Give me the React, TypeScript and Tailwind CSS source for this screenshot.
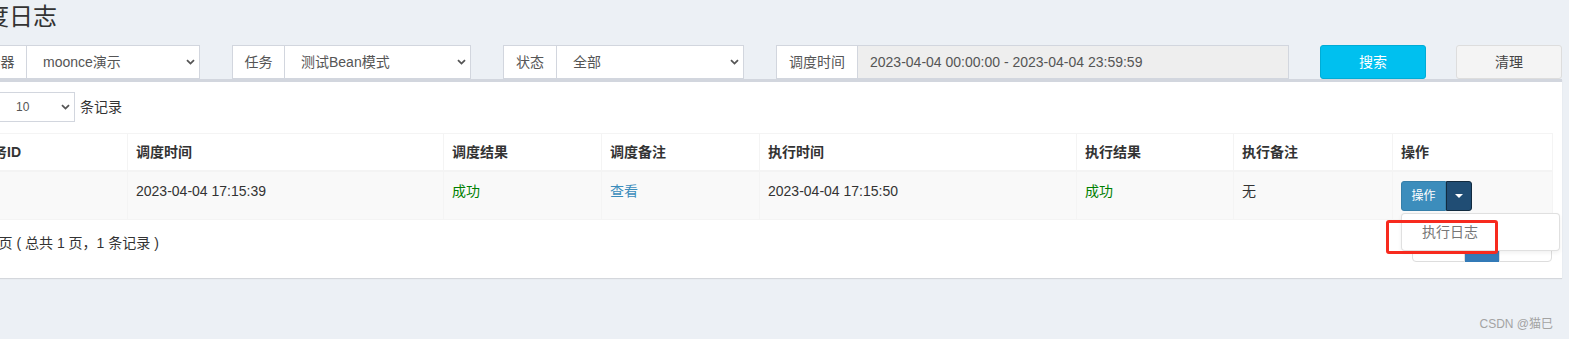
import React from "react";

function Chevron({ className = "" }: { className?: string }) {
  return (
    <svg width="9" height="6" viewBox="0 0 9 6" className={className}>
      <path d="M1 1.2 L4.5 4.6 L8 1.2" fill="none" stroke="#555" strokeWidth="1.8" />
    </svg>
  );
}

function Group({
  label,
  labelW,
  value,
  selW,
  mr,
}: {
  label: string;
  labelW: string;
  value: string;
  selW: string;
  mr: string;
}) {
  return (
    <div className={`flex h-[34px] ${mr}`}>
      <div
        className={`${labelW} flex items-center justify-center border border-r-0 border-[#d2d6de] bg-white text-[14px] text-[#555]`}
      >
        {label}
      </div>
      <div
        className={`${selW} flex items-center justify-between border border-[#d2d6de] bg-white pl-[16px] pr-[4px] text-[14px] text-[#555]`}
      >
        <span>{value}</span>
        <Chevron />
      </div>
    </div>
  );
}

export default function App() {
  const cols = [157, 316, 158, 158, 317, 157, 159, 160];
  const headers = ["任务ID", "调度时间", "调度结果", "调度备注", "执行时间", "执行结果", "执行备注", "操作"];
  return (
    <div className="relative w-[1569px] h-[339px] overflow-hidden bg-[#ecf0f5] font-['Liberation_Sans','Noto_Sans_CJK_SC',sans-serif] text-[#333]">
      {/* Title */}
      <div className="-ml-[39px] pt-[2px] text-[24px] leading-[30px] text-[#333] whitespace-nowrap">调度日志</div>

      {/* Filters */}
      <div className="flex -ml-[40px] mt-[13px] w-[1700px]">
        <Group label="执行器" labelW="w-[66px]" value="moonce演示" selW="w-[174px]" mr="mr-[32px]" />
        <Group label="任务" labelW="w-[52px]" value="测试Bean模式" selW="w-[187px]" mr="mr-[32px]" />
        <Group label="状态" labelW="w-[53px]" value="全部" selW="w-[188px]" mr="mr-[32px]" />
        <div className="flex h-[34px] mr-[31px]">
          <div className="w-[81px] flex items-center justify-center border border-r-0 border-[#d2d6de] bg-white text-[14px] text-[#555]">
            调度时间
          </div>
          <div className="w-[432px] flex items-center border border-[#d2d6de] bg-[#eee] pl-[12px] text-[14px] text-[#555]">
            2023-04-04 00:00:00 - 2023-04-04 23:59:59
          </div>
        </div>
        <div className="w-[106px] h-[34px] mr-[30px] flex items-center justify-center rounded-[3px] border border-[#00acd6] bg-[#00c0ef] text-[14px] text-white">
          搜索
        </div>
        <div className="w-[106px] h-[34px] flex items-center justify-center rounded-[3px] border border-[#ddd] bg-[#f4f4f4] text-[14px] text-[#444]">
          清理
        </div>
      </div>

      {/* Box */}
      <div className="-ml-[40px] w-[1602px] border-t-[3px] border-[#d2d6de] bg-white shadow-[0_1px_1px_rgba(0,0,0,0.1)] px-[10px] pt-[10px] pb-[16px]">
        {/* length */}
        <div className="flex items-center h-[30px]">
          <div className="ml-[27px] w-[78px] h-[30px] flex items-center justify-between border border-[#d2d6de] bg-white pl-[18px] pr-[4px] text-[12px] text-[#555]">
            <span>10</span>
            <Chevron />
          </div>
          <span className="ml-[5px] text-[14px] text-[#333]">条记录</span>
        </div>

        {/* table */}
        <table className="mt-[11px] w-[1582px] table-fixed border-collapse text-[14px]">
          <colgroup>
            {cols.map((w, i) => (
              <col key={i} style={{ width: `${w}px` }} />
            ))}
          </colgroup>
          <thead>
            <tr>
              {headers.map((h) => (
                <th
                  key={h}
                  className="border border-b-2 border-[#f4f4f4] px-[8px] py-[8px] text-left font-bold leading-[20px] text-[#333] whitespace-nowrap"
                >
                  {h}
                </th>
              ))}
            </tr>
          </thead>
          <tbody>
            <tr className="bg-[#f9f9f9]">
              <td className="border border-[#f4f4f4] px-[8px] pt-[9px] pb-[8px] align-top leading-[20px]"></td>
              <td className="border border-[#f4f4f4] px-[8px] pt-[9px] pb-[8px] align-top leading-[20px]">2023-04-04 17:15:39</td>
              <td className="border border-[#f4f4f4] px-[8px] pt-[9px] pb-[8px] align-top leading-[20px] text-[#008000]">成功</td>
              <td className="border border-[#f4f4f4] px-[8px] pt-[9px] pb-[8px] align-top leading-[20px] text-[#3c8dbc]">查看</td>
              <td className="border border-[#f4f4f4] px-[8px] pt-[9px] pb-[8px] align-top leading-[20px]">2023-04-04 17:15:50</td>
              <td className="border border-[#f4f4f4] px-[8px] pt-[9px] pb-[8px] align-top leading-[20px] text-[#008000]">成功</td>
              <td className="border border-[#f4f4f4] px-[8px] pt-[9px] pb-[8px] align-top leading-[20px]">无</td>
              <td className="border border-[#f4f4f4] px-[8px] pt-[9px] pb-[8px] align-top leading-[20px]">
                <div className="relative inline-flex h-[30px]">
                  <div className="w-[45px] h-[30px] flex items-center justify-center rounded-l-[3px] border border-[#367fa9] bg-[#3c8dbc] text-[12px] text-white">
                    操作
                  </div>
                  <div className="w-[26px] h-[30px] flex items-center justify-center rounded-r-[3px] border border-[#122b40] bg-[#204d74]">
                    <svg width="8" height="4" viewBox="0 0 8 4">
                      <path d="M0 0 L8 0 L4 4 Z" fill="#fff" />
                    </svg>
                  </div>
                  <div className="absolute left-0 top-[32px] z-10 w-[159px] rounded-[4px] border border-[rgba(0,0,0,0.12)] bg-white py-[5px] shadow-[0_2px_4px_rgba(0,0,0,0.06)]">
                    <div className="px-[20px] py-[3px] leading-[20px] text-[14px] text-[#777] whitespace-nowrap">执行日志</div>
                    <div className="absolute left-[-16px] top-[6px] w-[112px] h-[34px] rounded-[3px] border-[3px] border-[#f72a1e]"></div>
                  </div>
                </div>
              </td>
            </tr>
          </tbody>
        </table>

        {/* pagination */}
        <div className="mt-[8px] flex h-[34px] justify-between">
          <div className="-ml-[1px] pt-[5px] leading-[20px] text-[14px] text-[#333] whitespace-nowrap">
            第 1 页 ( 总共 1 页，1 条记录 )
          </div>
          <div className="flex h-[34px]">
            <div className="w-[53px] h-[34px] flex items-start justify-center pt-[5px] leading-[18px] rounded-l-[4px] border border-[#ddd] bg-white text-[13px] text-[#777]">上页</div>
            <div className="w-[34px] h-[34px] flex items-start justify-center pt-[5px] leading-[18px] border border-[#337ab7] bg-[#337ab7] text-[13px] text-white">1</div>
            <div className="w-[53px] h-[34px] flex items-start justify-center pt-[5px] leading-[18px] rounded-r-[4px] border border-[#ddd] bg-white text-[13px] text-[#777]">下页</div>
          </div>
        </div>
      </div>

      {/* watermark */}
      <div className="absolute right-[16px] top-[316px] text-[12px] leading-[16px] text-[#a3a3a3] whitespace-nowrap">CSDN @猫巳</div>
    </div>
  );
}
